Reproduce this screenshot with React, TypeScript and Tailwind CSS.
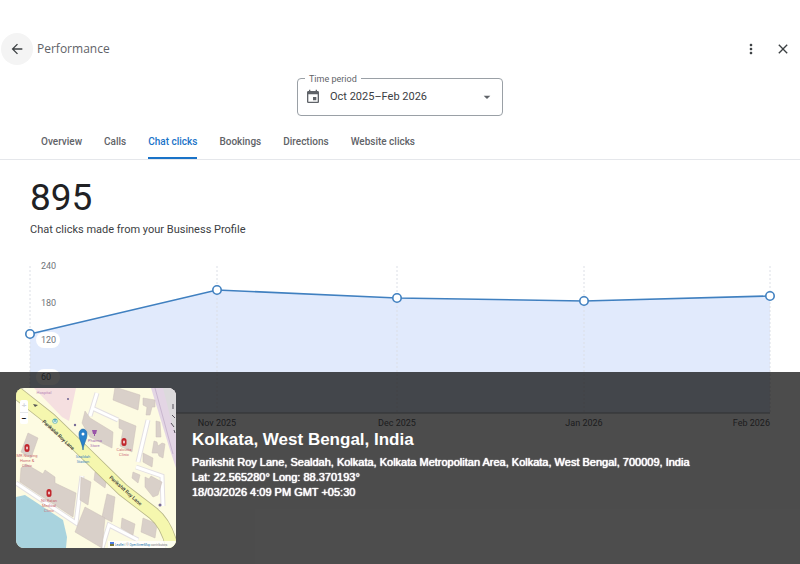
import { useState } from 'react';
import { MdArrowBack, MdArrowDropDown, MdClose, MdEvent, MdMoreVert } from 'react-icons/md';

const TABS = ['Overview', 'Calls', 'Chat clicks', 'Bookings', 'Directions', 'Website clicks'];

const POINTS = [
  { month: 'Oct 2025', x: 6, y: 74, anchor: 'start' as const },
  { month: 'Nov 2025', x: 193, y: 30, anchor: 'middle' as const },
  { month: 'Dec 2025', x: 373, y: 38, anchor: 'middle' as const },
  { month: 'Jan 2026', x: 560, y: 41, anchor: 'middle' as const },
  { month: 'Feb 2026', x: 746, y: 36, anchor: 'end' as const },
];

const GRID_LABELS = [
  { value: 240, y: 6 },
  { value: 180, y: 43 },
  { value: 120, y: 80 },
  { value: 60, y: 117 },
];

const BUILDINGS = [
  '99,-1 124,7 122,22 97,12',
  '127,10 139,12 139,19 136,19 134,27 130,27 131,19 127,17',
  '69,23 74,30 97,44 96,60 74,49 66,35',
  '103,31 120,38 116,64 104,58 107,42 103,40',
  '140,33 144,34 145,49 140,49',
  '138,53 141,54 142,58 146,55 149,56 147,70 143,68 142,65 136,65',
  '127,65 137,70 136,79 127,74',
  '12,45 22,50 15,70 5,64',
  '79,84 91,90 89,100 78,92',
  '91,106 99,109 96,134 86,129',
  '117,84 124,87 122,95 116,90',
  '129,89 133,91 135,88 146,94 142,107 137,109 129,99',
  '106,130 119,136 117,147 105,140',
  '127,130 141,136 139,150 125,144',
  '5,80 10,76 27,86 29,82 39,89 39,95 60,105 57,129 4,94',
  '65,89 75,94 72,117 64,112',
  '69,119 89,130 86,160 59,144',
];

const CLINICS = [
  { x: 11, y: 60, lines: ['MR Nursing', 'Home &', 'Clinic'] },
  { x: 108, y: 54, lines: ['Calcutta', 'Clinic'] },
  { x: 33, y: 105, lines: ['Nil Ratan', 'Medical', 'Clinic'] },
];

function ClicksChart() {
  const line = POINTS.map((p) => `${p.x},${p.y}`).join(' ');

  return (
    <svg viewBox="0 0 752 172" className="block w-full font-[Roboto,sans-serif]" role="img" aria-label="Chat clicks per month">
      <polygon points={`6,153 ${line} 746,153`} fill="#e1eafc" />
      {POINTS.map((p) => (
        <line key={p.month} x1={p.x} x2={p.x} y1="6" y2="153" stroke="#dcdfe6" strokeDasharray="2 2" />
      ))}
      <line x1="6" x2="746" y1="153" y2="153" stroke="#9aa0a6" />
      {GRID_LABELS.map((label) => (
        <g key={label.value}>
          <rect x="12" y={label.y - 8} width="24" height="16" rx="8" fill="#fff" />
          <text x="17" y={label.y + 3} fontSize="9" fill="#70757a">
            {label.value}
          </text>
        </g>
      ))}
      <polyline points={line} fill="none" stroke="#4080c0" strokeWidth="1.6" />
      {POINTS.map((p) => (
        <g key={p.month}>
          <circle cx={p.x} cy={p.y} r="4.2" fill="#fff" stroke="#4080c0" strokeWidth="1.6" />
          <text x={p.x} y="166" fontSize="9" fill="#5f6368" textAnchor={p.anchor}>
            {p.month}
          </text>
        </g>
      ))}
    </svg>
  );
}

function LocationMap() {
  return (
    <div className="relative size-40 shrink-0 overflow-hidden rounded-lg">
      <svg viewBox="0 0 160 160" className="size-full font-[Roboto,sans-serif] font-normal" role="img" aria-label="Map of Parikshit Roy Lane">
        <rect width="160" height="160" fill="#fdfbe2" />
        <polygon points="18,0 60,0 53,33 46,29" fill="#f5dfe0" />
        <polygon points="135,0 160,0 160,80 154,62" fill="#e3d5e4" />
        <polygon points="147,0 160,0 160,46 156,36" fill="#dcdadc" />
        <path d="M139,0 L157,66" stroke="#c9b6cf" fill="none" />
        <path d="M0,109 V160 H50 L51,149 L47,132 L9,107 Z" fill="#a9d3de" />
        <g fill="none" stroke="#e4e0e2" strokeWidth="5">
          <path d="M0,95 L60,135 L66,88" />
          <path d="M76,20 L102,32 M81,5 L74,28 M122,74 L132,32" />
          <path d="M86,160 L93,137 L122,152 M120,79 L146,88 L147,118" />
        </g>
        <g fill="none" stroke="#fff" strokeWidth="3">
          <path d="M0,95 L60,135 L66,88" />
          <path d="M76,20 L102,32 M81,5 L74,28 M122,74 L132,32" />
          <path d="M86,160 L93,137 L122,152 M120,79 L146,88 L147,118" />
        </g>
        <g fill="#d9d0c9" stroke="#cbbfb9" strokeWidth="0.5">
          {BUILDINGS.map((points) => (
            <polygon key={points} points={points} />
          ))}
        </g>
        <path d="M-4,1 L34,31 L66,62 L107,102 L137,125 Q152,137 157,164" fill="none" stroke="#b9b88a" strokeWidth="13" />
        <path d="M-4,1 L34,31 L66,62 L107,102 L137,125 Q152,137 157,164" fill="none" stroke="#f5f7ae" strokeWidth="11.5" />
        <g fill="#333" fontSize="5" fontWeight="500">
          <text transform="translate(26 34) rotate(43)">Parikshit Roy Lane</text>
          <text transform="translate(93 90) rotate(42)">Parikshit Roy Lane</text>
        </g>
        <path d="M17,16 l5,1 l-3,2 Z" fill="#555" />
        <path d="M157,16 v5 M156,27 l3,3 M155,35 l3,4 M158,42 l1,3" stroke="#55505a" fill="none" />
        <g fill="#766a96">
          <circle cx="52" cy="11" r="1.1" />
          <circle cx="59" cy="37" r="1.2" />
          <circle cx="144" cy="117" r="1.5" />
        </g>
        <circle cx="39" cy="33" r="2.6" fill="#58b0b8" />
        <path d="M37.8,32 v2.4 h2.4 v-2.4" fill="none" stroke="#fff" strokeWidth="0.8" />
        {CLINICS.map((clinic) => (
          <g key={clinic.x}>
            <rect x={clinic.x - 2.5} y={clinic.y - 4} width="5" height="8" rx="2.5" fill="#c1272d" />
            <path d={`M${clinic.x - 1} ${clinic.y} h2 m-1 -1.5 v3`} stroke="#fff" strokeWidth="0.9" />
            {clinic.lines.map((text, i) => (
              <text key={text} x={clinic.x} y={clinic.y + 9 + i * 5} fontSize="4" fill="#cb6a70" textAnchor="middle">
                {text}
              </text>
            ))}
          </g>
        ))}
        <path d="M76,42 h5 l-1,4 h-1 v2 h-1 v-2 h-1 Z" fill="#9a55a8" />
        <g fontSize="4" textAnchor="middle">
          <text x="79" y="54" fill="#a46bb0">Pharma</text>
          <text x="79" y="59" fill="#a46bb0">Store</text>
          <text x="67" y="70" fill="#3f86c0">Sealdah</text>
          <text x="67" y="75" fill="#3f86c0">Station</text>
          <text x="28" y="6" fill="#b786b5">Hospital</text>
        </g>
        <path d="M67,62 C66,54 63,52 63,46 a4,5 0 0 1 8,0 C71,52 68,54 67,62 Z" fill="#2a81cb" stroke="#1f659f" strokeWidth="0.6" />
        <circle cx="67" cy="46" r="1.5" fill="#fff" />
        <rect x="92" y="153" width="68" height="7" fill="#fff" opacity="0.8" />
        <rect x="94" y="154" width="4" height="2" fill="#4c7be1" />
        <rect x="94" y="156" width="4" height="2" fill="#7a7a3a" />
        <text x="99" y="158" fontSize="3" fill="#2878b0">
          Leaflet <tspan fill="#666">| ©</tspan> OpenStreetMap <tspan fill="#777">contributors</tspan>
        </text>
      </svg>
      <div className="absolute top-3 left-1 flex w-2 flex-col overflow-hidden rounded-xs bg-white text-[8px] leading-3 font-bold">
        <button type="button" aria-label="Zoom in" className="h-3 text-gray-300">+</button>
        <button type="button" aria-label="Zoom out" className="h-3 border-t border-gray-200 text-black">−</button>
      </div>
    </div>
  );
}

export default function App() {
  const [activeTab, setActiveTab] = useState('Chat clicks');

  return (
    <div className="relative min-h-screen bg-white font-[Roboto,sans-serif] text-[#3c4043]">
      <header className="flex items-center px-px pt-[33px]">
        <button type="button" aria-label="Back" className="flex size-8 items-center justify-center rounded-full bg-[#f4f4f4]">
          <MdArrowBack className="size-4" />
        </button>
        <h1 className="ml-1 flex-1 font-[Open_Sans,sans-serif] text-xs text-[#5f6368]">Performance</h1>
        <button type="button" aria-label="More options" className="flex size-8 items-center justify-center">
          <MdMoreVert className="size-4" />
        </button>
        <button type="button" aria-label="Close" className="flex size-8 items-center justify-center">
          <MdClose className="size-4" />
        </button>
      </header>

      <div className="mt-3 flex justify-center">
        <div className="relative w-[206px]">
          <label htmlFor="period" className="absolute -top-1 left-2 bg-white px-1 text-[9px] leading-3 text-[#5f6368]">
            Time period
          </label>
          <select
            id="period"
            className="mt-px block h-[38px] w-full appearance-none rounded-sm border border-[#9aa0a6] bg-transparent pl-8 text-[11px] text-[#3c4043]"
          >
            <option>Oct 2025–Feb 2026</option>
          </select>
          <MdEvent className="pointer-events-none absolute top-3 left-2 size-4 text-[#5f6368]" />
          <MdArrowDropDown className="pointer-events-none absolute top-3 right-2 size-4 text-[#5f6368]" />
        </div>
      </div>

      <nav className="mt-2 flex gap-[22px] border-b border-gray-200 px-[41px]">
        {TABS.map((tab) => (
          <button
            key={tab}
            type="button"
            onClick={() => setActiveTab(tab)}
            className={`h-[35px] border-b-2 pt-0.5 text-[10px] font-medium ${
              tab === activeTab ? 'border-[#1a73c8] text-[#1a73c8]' : 'border-transparent text-[#5f6368]'
            }`}
          >
            {tab}
          </button>
        ))}
      </nav>

      <main className="px-6 pt-3.5">
        <p className="px-1.5 text-[37px] leading-12 text-[#202124]">895</p>
        <p className="mb-[22px] px-1.5 text-[11px] leading-4">Chat clicks made from your Business Profile</p>
        <ClicksChart />
      </main>

      <section className="absolute inset-x-0 bottom-0 flex items-center gap-4 bg-black/70 p-4 font-['Liberation_Sans',Arial,sans-serif] text-white">
        <LocationMap />
        <div className="pb-2">
          <h2 className="mb-[3px] text-[17px] leading-6 font-bold">Kolkata, West Bengal, India</h2>
          <div className="text-[11px] leading-[15px] [text-shadow:0_0_1px_#fff,0_0_1px_#fff]">
            <p>Parikshit Roy Lane, Sealdah, Kolkata, Kolkata Metropolitan Area, Kolkata, West Bengal, 700009, India</p>
            <p>Lat: 22.565280° Long: 88.370193°</p>
            <p>18/03/2026 4:09 PM GMT +05:30</p>
          </div>
        </div>
      </section>
    </div>
  );
}
